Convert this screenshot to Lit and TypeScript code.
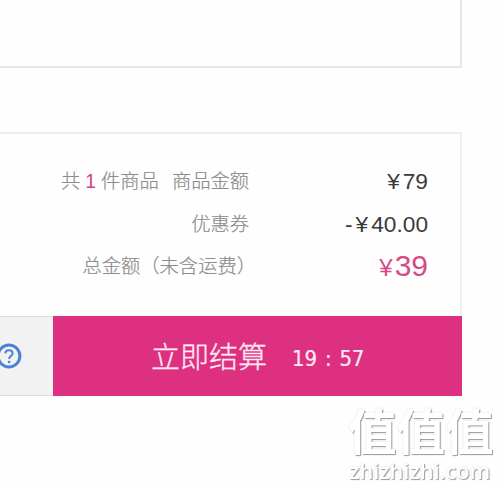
import { LitElement, html, css } from "lit";
import { customElement } from "lit/decorators.js";

@customElement("app-root")
export class AppRoot extends LitElement {
  static styles = css`
    :host {
      display: block;
      position: relative;
      width: 500px;
      height: 488px;
      overflow: hidden;
      background: #fefefe;
      font-family: "Liberation Sans", "Noto Sans CJK SC", sans-serif;
      white-space: nowrap;
    }
    .panel, .summary {
      box-sizing: border-box;
      width: 462px;
      border-right: 2px solid #e6e6e6;
    }
    .panel {
      height: 68px;
      border-bottom: 2px solid #e6e6e6;
    }
    .summary {
      margin-top: 64px;
      height: 184px;
      padding: 26px 32px 0 0;
      border-top: 2px solid #ececec;
      border-right-color: #eee;
    }
    .row {
      display: grid;
      grid-template-columns: 249px 1fr;
      height: 42px;
      line-height: 42px;
      text-align: right;
    }
    .row:first-child { height: 43px; }
    .label {
      font-family: "Noto Sans CJK SC", sans-serif;
      font-weight: 300;
      font-size: 19.3px;
      color: #8c8c8c;
      -webkit-text-stroke: 0.2px #8c8c8c;
      margin-top: -1px;
    }
    .note { margin-right: -7px; }
    .count {
      font-family: "Liberation Sans", sans-serif;
      font-weight: 400;
      color: #d23f80;
      margin: 0 5px;
      -webkit-text-stroke: 0;
    }
    .gap { margin-left: 13px; }
    .value { font-size: 22.7px; color: #3a3a3a; }
    .yen { margin: 0 3px; }
    .total { font-size: 30px; color: #d44b88; }
    .total .yen { font-size: 24px; margin: 0 2px; }
    .bar {
      display: flex;
      width: 462px;
      height: 80px;
    }
    .help {
      box-sizing: border-box;
      width: 53px;
      border-top: 1px solid #ddd;
      border-bottom: 1px solid #ddd;
      background: #f2f2f2;
      display: flex;
      align-items: center;
    }
    .help svg { display: block; margin-left: -4px; flex: none; }
    .pay {
      box-sizing: border-box;
      flex: 1;
      display: flex;
      align-items: center;
      padding-left: 98px;
      background: #dd3080;
      color: #fdeaf4;
      font: 300 29px "Noto Sans CJK SC", sans-serif;
    }
    .pay .action { margin-top: -2px; -webkit-text-stroke: 0.3px #fdeaf4; }
    .timer {
      margin: 4px 0 0 25px;
      font: 400 22px "DejaVu Sans Condensed", "DejaVu Sans", sans-serif;
      font-stretch: condensed;
      letter-spacing: -0.2px;
      word-spacing: 2px;
      -webkit-text-stroke: 0.2px #fdeaf4;
    }
    .mark {
      position: absolute;
      left: 348px;
      top: 399px;
      width: 150px;
      color: #fff;
      text-shadow: 1px 1px 1px #999, 0 0 2px #ddd;
      will-change: transform;
    }
    .brand {
      height: 57px;
      font: 700 48.5px/60px "Noto Sans CJK SC", sans-serif;
    }
    .domain {
      padding-left: 1px;
      font: 600 21.7px/29px "Open Sans", sans-serif;
    }
  `;

  render() {
    return html`
      <div class="panel"></div>
      <div class="summary">
        <div class="row">
          <div class="label">共<span class="count">1</span>件商品<span class="gap">商品金额</span></div>
          <div class="value"><span class="yen">¥</span>79</div>
        </div>
        <div class="row">
          <div class="label">优惠券</div>
          <div class="value">-<span class="yen">¥</span>40.00</div>
        </div>
        <div class="row">
          <div class="label note">总金额（未含运费）</div>
          <div class="value total"><span class="yen">¥</span>39</div>
        </div>
      </div>
      <div class="bar">
        <div class="help">
          <svg width="26" height="26" viewBox="0 0 26 26" fill="none" stroke="#4c83d9">
            <circle cx="13" cy="13" r="10.9" stroke-width="3" />
            <path d="M9.4 10.6C9.4 8.5 11 7.3 13 7.3s3.6 1.2 3.6 3.2c0 2.5-3.5 2.7-3.5 5.5" stroke-width="2" />
            <circle cx="13.1" cy="19" r="1.3" fill="#4c83d9" stroke="none" />
          </svg>
        </div>
        <div class="pay"><span class="action">立即结算</span><span class="timer">19 : 57</span></div>
      </div>
      <div class="mark">
        <div class="brand">值值值</div>
        <div class="domain">zhizhizhi.com</div>
      </div>
    `;
  }
}
